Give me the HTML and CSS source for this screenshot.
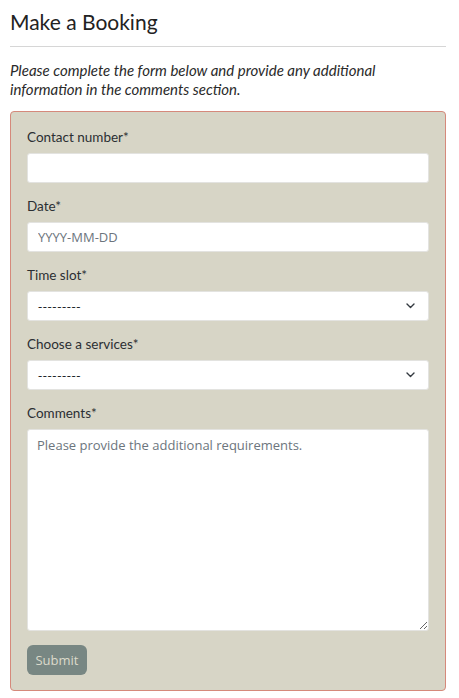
FILE: index.html
```html
<!DOCTYPE html>
<html>
<head>
<meta charset="utf-8">
<link rel="stylesheet" href="styles.css">
</head>
<body>
<div class="page">
  <h1 class="title">Make a Booking</h1>
  <hr class="rule">
  <p class="intro">Please complete the form below and provide any additional information in the comments section.</p>
  <form class="booking">
    <div class="field">
      <label class="label">Contact number*</label>
      <input class="control" type="text">
    </div>
    <div class="field">
      <label class="label">Date*</label>
      <input class="control" type="text" placeholder="YYYY-MM-DD">
    </div>
    <div class="field">
      <label class="label">Time slot*</label>
      <div class="select">
        <span class="select-text">---------</span>
        <svg class="chev" width="9" height="6" viewBox="0 0 9 6"><path d="M1 1l3.5 3.5L8 1" fill="none" stroke="#343a40" stroke-width="1.4" stroke-linecap="round" stroke-linejoin="round"/></svg>
      </div>
    </div>
    <div class="field">
      <label class="label">Choose a services*</label>
      <div class="select">
        <span class="select-text">---------</span>
        <svg class="chev" width="9" height="6" viewBox="0 0 9 6"><path d="M1 1l3.5 3.5L8 1" fill="none" stroke="#343a40" stroke-width="1.4" stroke-linecap="round" stroke-linejoin="round"/></svg>
      </div>
    </div>
    <div class="field">
      <label class="label">Comments*</label>
      <textarea class="control area" placeholder="Please provide the additional requirements."></textarea>
    </div>
    <button class="submit" type="button">Submit</button>
  </form>
</div>
</body>
</html>
```
FILE: styles.css
```css
html, body { margin: 0; padding: 0; background: #fff; }
.page {
  padding: 0 13px 0 10px;
  font-family: Lato, sans-serif;
  color: #212529;
}
.title {
  margin: 0;
  padding-top: 8px;
  font-family: Lato, sans-serif;
  font-weight: 400;
  font-size: 21px;
  line-height: 28px;
  color: #222;
}
.rule {
  margin: 10px 0 0 0;
  border: 0;
  border-top: 1px solid #d6d6d6;
  height: 0;
}
.intro {
  margin: 14px 0 0 0;
  font-family: Lato, sans-serif;
  font-style: italic;
  font-size: 15px;
  line-height: 19px;
  color: #2a2a2a;
}
.booking {
  margin-top: 12px;
  background: #d7d5c6;
  border: 1px solid #d5897b;
  border-radius: 4px;
  padding: 16px 16px 15px 16px;
  display: flex;
  flex-direction: column;
}
.field { display: flex; flex-direction: column; margin-bottom: 14px; }
.label {
  font-family: Lato, sans-serif;
  font-size: 13.5px;
  line-height: 18px;
  color: #2b2f33;
  margin-bottom: 7px;
}
.control {
  box-sizing: border-box;
  width: 100%;
  height: 30px;
  border: 1px solid #e3e3e0;
  border-radius: 3px;
  background: #fff;
  padding: 0 10px;
  font-family: "Open Sans", sans-serif;
  font-size: 13px;
  color: #212529;
  outline: none;
}
.control::placeholder { color: #6c757d; }
.area {
  height: 202px;
  padding: 6px 9px;
  resize: vertical;
  line-height: 18px;
}
.select {
  box-sizing: border-box;
  height: 30px;
  border: 1px solid #e3e3e0;
  border-radius: 3px;
  background: #fff;
  padding: 0 13px 0 10px;
  display: flex;
  align-items: center;
  justify-content: space-between;
  font-family: "Open Sans", sans-serif;
  font-size: 13px;
}
.select-text { color: #212529; letter-spacing: 0.6px; }
.submit {
  align-self: flex-start;
  width: 60px;
  height: 30px;
  margin-top: 0;
  border: 0;
  border-radius: 6px;
  background: #788783;
  color: #dcdacb;
  font-family: "Open Sans", sans-serif;
  font-size: 13px;
  padding: 0;
}
```
